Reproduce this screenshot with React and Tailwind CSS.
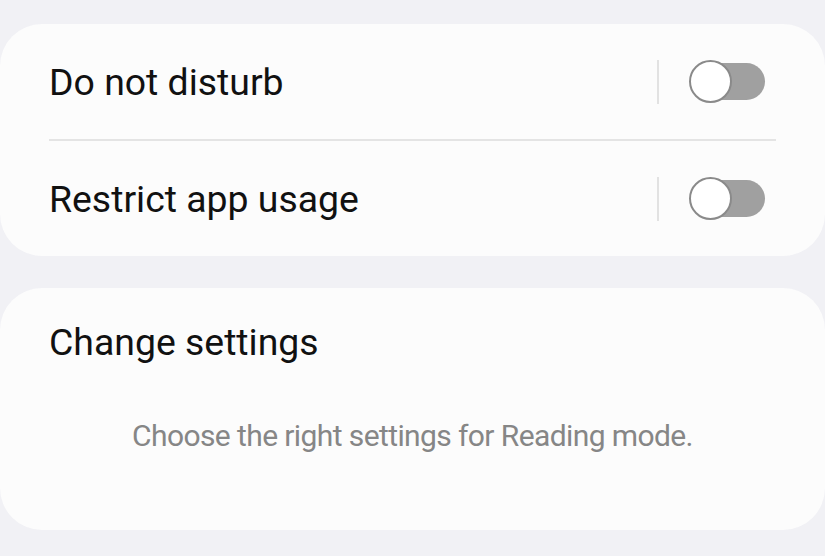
import React, { useState } from 'react';

function Toggle({ checked, onChange }) {
  return (
    <button
      onClick={() => onChange(!checked)}
      className="relative w-[76px] h-[44px] flex items-center"
    >
      <span className="absolute left-[4px] right-0 h-[37px] rounded-full bg-[#a0a0a0]" />
      <span className="absolute left-0 w-[43px] h-[43px] rounded-full bg-white border-2 border-[#8a8a8a]" />
    </button>
  );
}

function ToggleRow({ label, checked, onChange }) {
  return (
    <div className="flex items-center h-[115px] pl-[49px] pr-[60px]">
      <span className="flex-1 text-[37.4px] text-[#111] pt-[2px]">{label}</span>
      <div className="w-[2px] h-[44px] bg-[#e2e2e2] mr-[30px]" />
      <Toggle checked={checked} onChange={onChange} />
    </div>
  );
}

export default function App() {
  const [dnd, setDnd] = useState(false);
  const [restrict, setRestrict] = useState(false);

  return (
    <div
      className="w-[825px] h-[556px] bg-[#f1f1f5] pt-[24px] overflow-hidden"
      style={{ fontFamily: 'Roboto, "Noto Sans", sans-serif' }}
    >
      {/* Toggles card */}
      <div className="bg-[#fcfcfc] rounded-[42px]">
        <ToggleRow label="Do not disturb" checked={dnd} onChange={setDnd} />
        <div className="mx-[49px] h-[2px] bg-[#e4e4e4]" />
        <ToggleRow label="Restrict app usage" checked={restrict} onChange={setRestrict} />
      </div>

      {/* Change settings card */}
      <div className="mt-[32px] bg-[#fcfcfc] rounded-[42px] h-[242px] pt-[34px]">
        <p className="pl-[49px] text-[37.4px] text-[#111] leading-[40px]">Change settings</p>
        <p className="mt-[51px] text-center text-[30px] text-[#868686] tracking-[-0.6px]">
          Choose the right settings for Reading mode.
        </p>
      </div>
    </div>
  );
}
